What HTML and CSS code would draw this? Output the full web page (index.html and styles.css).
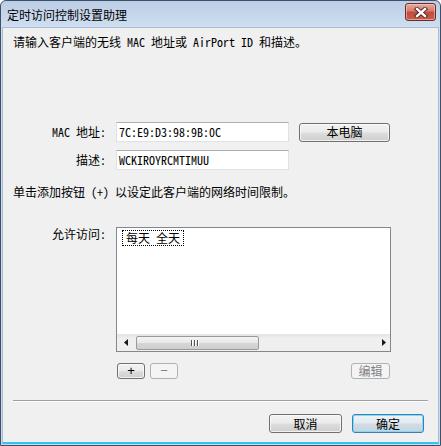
FILE: index.html
```html
<!DOCTYPE html>
<html>
<head>
<meta charset="utf-8">
<link rel="stylesheet" href="styles.css">
</head>
<body>
<div class="window">
  <div class="titlebar">
    <span class="title">定时访问控制设置助理</span>
    <div class="close">
      <svg width="14" height="11" viewBox="0 0 14 11">
        <path d="M3 2 L11 9 M11 2 L3 9" stroke="#4a1a1a" stroke-width="4.2" stroke-linecap="square" fill="none"/>
        <path d="M3 2 L11 9 M11 2 L3 9" stroke="#ffffff" stroke-width="2.4" stroke-linecap="square" fill="none"/>
      </svg>
    </div>
  </div>
  <div class="client">
    <p class="intro">请输入客户端的无线 MAC 地址或 AirPort ID 和描述。</p>
    <div class="form">
      <span class="lbl">MAC 地址:</span>
      <div class="input">7C:E9:D3:98:9B:0C</div>
      <div class="btn btn-mac">本电脑</div>
      <span class="lbl">描述:</span>
      <div class="input">WCKIROYRCMTIMUU</div>
      <span></span>
    </div>
    <p class="hint">单击添加按钮 (+) 以设定此客户端的网络时间限制。</p>
    <div class="access">
      <span class="lbl">允许访问:</span>
      <div class="listbox">
        <div class="items"><span class="item">每天 全天</span></div>
        <div class="hscroll">
          <svg class="arrow" width="5" height="7" viewBox="0 0 5 7"><path d="M4 0 L4 7 L0 3.5 Z" fill="#1a1a1a"/></svg>
          <div class="track">
            <div class="thumb"><span class="grip"></span><span class="grip"></span><span class="grip"></span></div>
          </div>
          <svg class="arrow" width="5" height="7" viewBox="0 0 5 7"><path d="M1 0 L1 7 L5 3.5 Z" fill="#1a1a1a"/></svg>
        </div>
      </div>
    </div>
    <div class="listbtns">
      <div class="btn btn-small">+</div>
      <div class="btn btn-small disabled">−</div>
      <div class="btn btn-edit disabled">编辑</div>
    </div>
    <div class="sep"></div>
    <div class="footer">
      <div class="btn btn-foot">取消</div>
      <div class="btn btn-foot default">确定</div>
    </div>
  </div>
</div>
</body>
</html>
```
FILE: styles.css
```css
* { box-sizing: border-box; }
html, body { margin: 0; padding: 0; }
body {
  width: 441px;
  height: 446px;
  background: #ffffff;
  font-family: "Noto Sans Mono CJK SC", "Noto Sans CJK SC", "Liberation Mono", monospace;
  font-size: 12px;
  color: #000;
}
.window {
  width: 441px;
  height: 446px;
  border: 1px solid #3d5068;
  border-radius: 6px 6px 0 0;
  background: linear-gradient(#bccee6 0, #cfdef0 26px, #c9daee 100%);
  display: flex;
  flex-direction: column;
}
.titlebar {
  height: 26px;
  flex: none;
  display: flex;
  align-items: center;
  padding-left: 6px;
  padding-right: 4px;
}
.title {
  font-family: "Noto Sans CJK SC", sans-serif;
  font-size: 12px;
  line-height: 14px;
  color: #000;
  flex: 1;
  margin-top: 1px;
}
.close {
  width: 31px;
  height: 18px;
  margin-top: -4px;
  border: 1px solid #6a2b2b;
  border-radius: 3px;
  background: linear-gradient(#e9a99b 0, #d7796b 45%, #c24a3c 50%, #c95f4e 100%);
  box-shadow: inset 0 0 0 1px rgba(255, 220, 210, 0.5);
  display: flex;
  align-items: center;
  justify-content: center;
}
.client {
  flex: 1;
  margin: 0 1px 1px 1px;
  background: #f0f0f0;
  border: 1px solid #a9bcd5;
  border-bottom: 2px solid #34c4e8;
  display: flex;
  flex-direction: column;
}
.intro {
  margin: 6px 0 0 10px;
  line-height: 16px;
}
.form {
  margin-top: 72px;
  display: grid;
  grid-template-columns: 103px 173px 91px;
  grid-auto-rows: 20px;
  column-gap: 10px;
  row-gap: 8px;
  align-items: center;
}
.lbl {
  text-align: right;
  line-height: 14px;
}
.input {
  height: 20px;
  background: #fff;
  border: 1px solid #dde2e8;
  border-top-color: #abadb3;
  padding-left: 2px;
  line-height: 18px;
  font-size: 12px;
  white-space: nowrap;
}
.btn {
  display: flex;
  align-items: center;
  justify-content: center;
  border: 1px solid #707070;
  border-radius: 3px;
  background: linear-gradient(#f2f2f2 0, #ebebeb 48%, #dddddd 52%, #cfcfcf 100%);
  box-shadow: inset 0 0 0 1px rgba(255, 255, 255, 0.7);
  font-family: "Noto Sans CJK SC", sans-serif;
  font-size: 12px;
  line-height: 14px;
}
.btn-mac {
  height: 19px;
}
.hint {
  margin: 14px 0 0 10px;
  line-height: 16px;
}
.access {
  margin-top: 27px;
  display: flex;
  gap: 10px;
  align-items: flex-start;
}
.access .lbl {
  width: 103px;
  flex: none;
  margin-top: 0;
}
.listbox {
  width: 275px;
  height: 125px;
  background: #fff;
  border: 1px solid #828790;
  display: flex;
  flex-direction: column;
}
.items {
  flex: 1;
  padding: 1px 0 0 5px;
}
.item {
  display: inline-block;
  border: 1px dotted #000;
  padding: 0 3px;
  line-height: 14px;
}
.hscroll {
  height: 17px;
  flex: none;
  display: flex;
  align-items: center;
  background: linear-gradient(#e3e3e3, #f0f0f0 30%, #efefef);
  padding: 0 4px 0 7px;
  gap: 7px;
}
.track {
  flex: 1;
  height: 17px;
  display: flex;
  align-items: center;
}
.thumb {
  width: 123px;
  height: 14px;
  border: 1px solid #9a9a9a;
  border-radius: 2px;
  background: linear-gradient(#f4f4f4 0, #e8e8e8 50%, #d6d6d6 51%, #cfcfcf 100%);
  display: flex;
  align-items: center;
  gap: 1px;
  padding-left: 54px;
  justify-content: flex-start;
}
.grip {
  width: 1px;
  height: 6px;
  background: #555;
  box-shadow: 1px 0 0 #fff;
  margin-right: 1px;
}
.listbtns {
  margin: 11px 0 0 114px;
  width: 273px;
  height: 16px;
  display: flex;
  gap: 5px;
}
.btn-small {
  width: 28px;
  height: 16px;
  font-family: "Liberation Sans", sans-serif;
  font-size: 13px;
}
.btn-edit {
  width: 39px;
  height: 16px;
  margin-left: auto;
}
.btn.disabled {
  border-color: #adb2b5;
  background: #f4f4f4;
  color: #838383;
  box-shadow: none;
}
.sep {
  margin: 21px 10px 0 10px;
  height: 2px;
  border-top: 1px solid #a0a0a0;
  border-bottom: 1px solid #ffffff;
}
.footer {
  margin-top: 12px;
  display: flex;
  justify-content: flex-end;
  gap: 10px;
  padding-right: 14px;
}
.btn-foot {
  width: 73px;
  height: 19px;
}
.btn.default {
  width: 72px;
  border-color: #3c7fb1;
  box-shadow: inset 0 0 0 1px #7fdcf9;
  background: linear-gradient(#eef4f8 0, #e2eaf0 48%, #d3dce4 52%, #c9d3dc 100%);
}
```
